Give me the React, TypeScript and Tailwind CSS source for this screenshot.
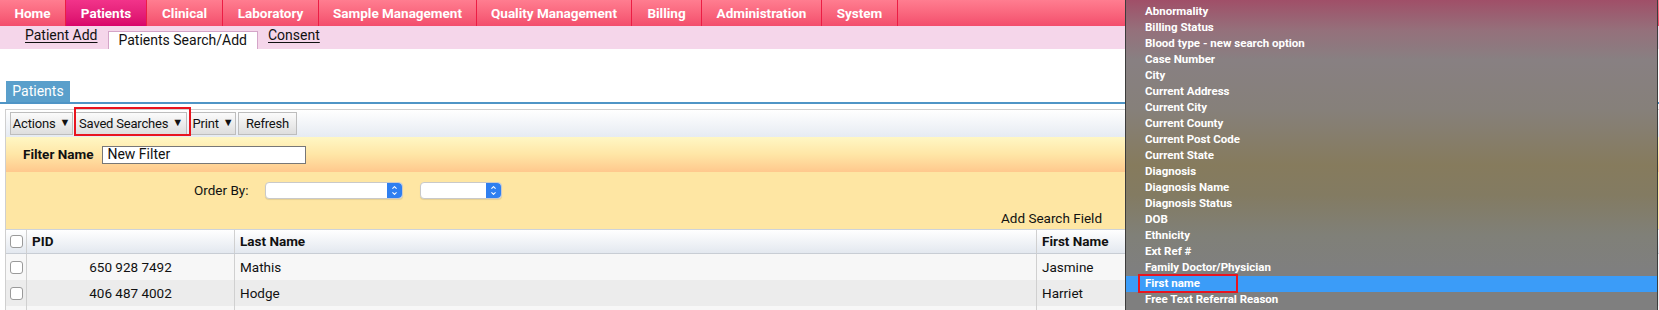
import { ChevronDown, ChevronUp } from "lucide-react";

const tabs = [
  { name: "Home", w: "w-[66px]" },
  { name: "Patients", w: "w-[81px]", active: true },
  { name: "Clinical", w: "w-[76px]" },
  { name: "Laboratory", w: "w-[96px]" },
  { name: "Sample Management", w: "w-[158px]" },
  { name: "Quality Management", w: "w-[155px]" },
  { name: "Billing", w: "w-[70px]" },
  { name: "Administration", w: "w-[120px]" },
  { name: "System", w: "w-[76px]" },
];

const fields = [
  "Abnormality",
  "Billing Status",
  "Blood type - new search option",
  "Case Number",
  "City",
  "Current Address",
  "Current City",
  "Current County",
  "Current Post Code",
  "Current State",
  "Diagnosis",
  "Diagnosis Name",
  "Diagnosis Status",
  "DOB",
  "Ethnicity",
  "Ext Ref #",
  "Family Doctor/Physician",
  "First name",
  "Free Text Referral Reason",
];

const rows = [
  { pid: "650 928 7492", last: "Mathis", first: "Jasmine", bg: "bg-[#f7f7f7]" },
  { pid: "406 487 4002", last: "Hodge", first: "Harriet", bg: "bg-[#ececec]" },
  { pid: "", last: "", first: "", bg: "bg-[#f7f7f7]" },
];

function Check() {
  return <span className="block w-[13px] h-[13px] rounded-[3px] border border-[#9a9a9a] bg-white" />;
}

function Select({ w }: { w: string }) {
  return (
    <div className={`flex h-[17px] ${w} rounded-[4px] border border-[#c9c9c9] bg-white shadow-[0_1px_1px_rgba(0,0,0,0.1)]`}>
      <div className="flex-1" />
      <div className="flex w-[15px] flex-col items-center justify-center rounded-r-[4px] bg-[#2f7ff0] text-white">
        <ChevronUp size={7} strokeWidth={3.5} className="-mb-[1px]" />
        <ChevronDown size={7} strokeWidth={3.5} />
      </div>
    </div>
  );
}

function ToolBtn({ label, arrow, w }: { label: string; arrow?: boolean; w: string }) {
  return (
    <div className={`flex h-[23px] ${w} items-center justify-center gap-[4px] border border-[#bdbdbd] bg-gradient-to-b from-[#fbfbfb] to-[#dedede] text-[13px] tracking-[-0.2px] text-[#111]`}>
      <span>{label}</span>
      {arrow && <span className="text-[11px]">▼</span>}
    </div>
  );
}

export default function App() {
  return (
    <div className="relative h-[310px] w-[1659px] overflow-hidden bg-white font-['Roboto',sans-serif] text-[13px] text-[#111]">
      {/* top nav */}
      <div className="flex h-[26px] bg-gradient-to-b from-[#ff7d90] to-[#f34d6c]">
        {tabs.map((t) => (
          <div
            key={t.name}
            className={`flex ${t.w} items-center justify-center border-r border-[#ec1d44] text-[13.5px] font-bold text-white ${
              t.active ? "bg-gradient-to-b from-[#f2338a] to-[#d9036a]" : ""
            }`}
          >
            {t.name}
          </div>
        ))}
      </div>

      {/* sub nav */}
      <div className="flex h-[23px] items-end bg-[#f5d6ea] pl-[25px] text-[14px]">
        <span className="mb-[3px] underline underline-offset-2">Patient Add</span>
        <span className="ml-[10px] flex h-[18px] items-center border border-b-0 border-[#d4a5c8] bg-white px-[10px]">
          Patients Search/Add
        </span>
        <span className="mb-[3px] ml-[10px] underline underline-offset-2">Consent</span>
      </div>

      {/* panel tab */}
      <div className="mt-[32px] flex pl-[6px]">
        <div className="flex h-[21px] w-[64px] items-center justify-center bg-[#5a9fcb] text-[14px] text-white">Patients</div>
      </div>
      <div className="h-[2px] bg-[#4f95c6]" />

      {/* grid box */}
      <div className="mt-[5px] ml-[5px] border-t border-l border-[#cfcfcf]">
        <div className="flex h-[27px] items-center gap-[2px] bg-gradient-to-b from-white to-[#e6ebf2] pl-[4px]">
          <ToolBtn label="Actions" arrow w="w-[63px]" />
          <div className="relative">
            <ToolBtn label="Saved Searches" arrow w="w-[112px]" />
            <div className="absolute -left-[1px] -right-[4px] -top-[5px] bottom-[-1px] border-2 border-[#e8141f]" />
          </div>
          <div className="ml-[1px]">
            <ToolBtn label="Print" arrow w="w-[46px]" />
          </div>
          <ToolBtn label="Refresh" w="w-[59px]" />
        </div>

        <div className="flex h-[35px] items-center bg-gradient-to-b from-[#fff7c4] via-[#ffe6a6] to-[#ffc88d] pl-[17px]">
          <span className="text-[13.5px] font-bold">Filter Name</span>
          <div className="ml-[9px] flex h-[18px] w-[204px] items-center border border-[#777] bg-white px-[4px] text-[14px]">
            New Filter
          </div>
        </div>

        <div className="relative h-[58px] border-b border-[#cdd3da] bg-[#fee6a3]">
          <div className="flex items-start pl-[188px] pt-[8px]">
            <span className="text-[13.5px]">Order By:</span>
            <div className="ml-[16px] mt-[2px]">
              <Select w="w-[138px]" />
            </div>
            <div className="ml-[17px] mt-[2px]">
              <Select w="w-[82px]" />
            </div>
          </div>
          <div className="absolute right-[557px] top-[36px] text-[13.5px]">Add Search Field</div>
        </div>

        {/* table */}
        <div className="flex h-[24px] items-center border-b border-[#c8cdd4] bg-gradient-to-b from-white to-[#e3e8ef] font-bold text-[13.5px]">
          <div className="flex w-[21px] justify-center border-r border-[#d0d0d0] h-full items-center">
            <Check />
          </div>
          <div className="flex h-full w-[208px] items-center border-r border-[#d0d0d0] pl-[5px]">PID</div>
          <div className="flex h-full w-[802px] items-center border-r border-[#d0d0d0] pl-[5px]">Last Name</div>
          <div className="flex h-full items-center pl-[5px]">First Name</div>
        </div>
        {rows.map((r, i) => (
          <div key={i} className={`flex h-[26px] items-center ${r.bg} text-[13.5px]`}>
            <div className="flex h-full w-[21px] items-center justify-center border-r border-[#d0d0d0]">
              <Check />
            </div>
            <div className="flex h-full w-[208px] items-center justify-center border-r border-[#d0d0d0]">{r.pid}</div>
            <div className="flex h-full w-[802px] items-center border-r border-[#d0d0d0] pl-[5px]">{r.last}</div>
            <div className="flex h-full items-center pl-[5px]">{r.first}</div>
          </div>
        ))}
      </div>

      {/* field dropdown menu */}
      <div className="absolute left-[1125px] top-0 h-[310px] w-[533px] border-x border-[#3c3c3c] bg-[linear-gradient(to_bottom,#a04f68_0px,#95707b_30px,#888082_60px,#86807a_110px,#867b5d_165px,#837b62_195px,#808078_235px,#7f7f7f_270px,#7f7f7f_310px)] pt-[4px] font-['Roboto',sans-serif] text-[11.5px] font-bold text-white">
        {fields.map((f) => (
          <div key={f} className={`relative flex h-[16px] items-center pl-[19px] ${f === "First name" ? "bg-[#3b9cf8]" : ""}`}>
            <span>{f}</span>
            {f === "First name" && (
              <div className="absolute left-[12px] top-[-2px] h-[19px] w-[100px] border-2 border-[#e8141f]" />
            )}
          </div>
        ))}
      </div>
    </div>
  );
}
